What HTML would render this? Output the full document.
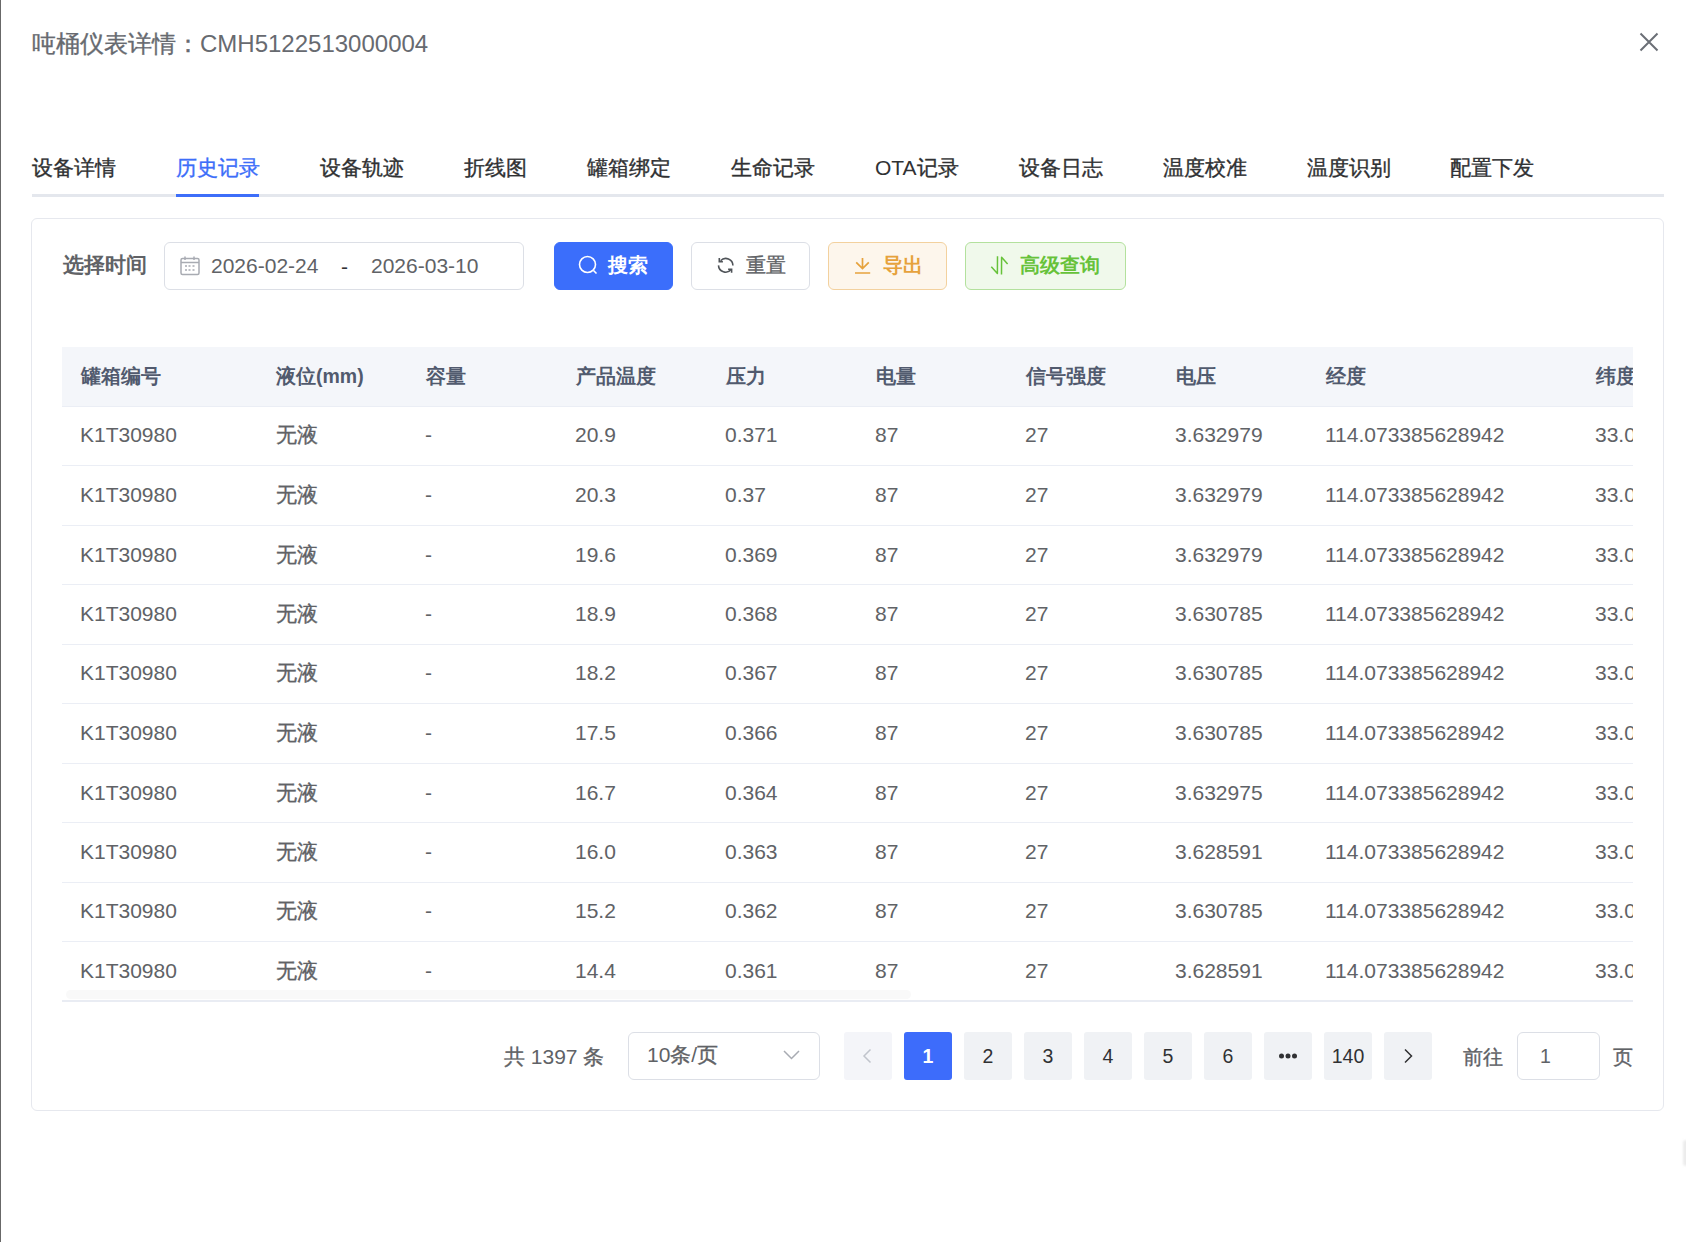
<!DOCTYPE html>
<html><head><meta charset="utf-8">
<style>
*{box-sizing:border-box;margin:0;padding:0}
html,body{width:1686px;height:1242px;overflow:hidden;background:#fff;font-family:"Liberation Sans",sans-serif}
.a{position:absolute;white-space:nowrap}
#edge{position:absolute;left:0;top:0;width:1px;height:1242px;background:#686868}
.ts{-webkit-text-stroke:0.35px currentColor}
#title{left:32px;top:30px;font-size:24px;line-height:28px;color:#676a70}
.tab{top:154px;font-size:21px;line-height:28px;color:#303133}
.tab.on{color:#3d6ef9}
#tabline{left:32px;top:194px;width:1632px;height:3px;background:#e4e7ed}
#tabbar{left:176px;top:194px;width:83px;height:3px;background:#3d6ef9}
#card{left:31px;top:218px;width:1633px;height:893px;border:1px solid #e6e8ee;border-radius:6px}
#lbl{left:63px;top:251px;font-size:21px;line-height:28px;font-weight:bold;color:#606266}
#date{left:164px;top:242px;width:360px;height:48px;border:1px solid #dcdfe6;border-radius:6px}
.dt{top:252px;font-size:21px;line-height:28px;color:#606266}
.btn{top:242px;height:48px;border-radius:6px;border:1px solid #dcdfe6}
.bt{top:250.5px;font-size:20px;line-height:28px;font-weight:bold}
#tbl{left:62px;top:347px;width:1571px;height:655px;overflow:hidden}
#thead{position:absolute;left:0;top:0;width:1571px;height:60px;background:#f4f6fa;border-bottom:1px solid #ebeef5}
.th{top:15px;font-size:19.5px;line-height:28px;font-weight:bold;color:#515a6e}
.row{position:absolute;left:0;width:1571px;border-bottom:1px solid #ebeef5}
.td{font-size:21px;line-height:28px;color:#606266}
#thumb{left:4px;top:643px;width:845px;height:9px;border-radius:5px;background:#f9f9f9}
#tbot{left:0;top:653px;width:1571px;height:2px;background:#e9ecf3}
.pg{top:1032px;width:48px;height:48px;border-radius:3px;background:#f0f2f5;font-size:19.5px;line-height:48px;text-align:center;color:#303133}
.pt{font-size:21px;line-height:28px;color:#606266}
</style></head><body>
<div id="edge"></div>
<div class="a" style="left:1683px;top:1140px;width:6px;height:26px;border-radius:3px;background:#ececec;filter:blur(1px)"></div>
<div id="title" class="a"><span class="ts">吨桶仪表详情：</span>CMH5122513000004</div>
<svg class="a" style="left:1638px;top:31px" width="22" height="22" viewBox="0 0 22 22"><path d="M2.5 2.5L19.5 19.5M19.5 2.5L2.5 19.5" stroke="#6b6f76" stroke-width="2" fill="none"/></svg>

<div class="a tab ts" style="left:32px">设备详情</div>
<div class="a tab on ts" style="left:176px">历史记录</div>
<div class="a tab ts" style="left:320px">设备轨迹</div>
<div class="a tab ts" style="left:464px">折线图</div>
<div class="a tab ts" style="left:587px">罐箱绑定</div>
<div class="a tab ts" style="left:731px">生命记录</div>
<div class="a tab" style="left:875px">OTA<span class="ts">记录</span></div>
<div class="a tab ts" style="left:1019px">设备日志</div>
<div class="a tab ts" style="left:1163px">温度校准</div>
<div class="a tab ts" style="left:1307px">温度识别</div>
<div class="a tab ts" style="left:1450px">配置下发</div>
<div id="tabline" class="a"></div>
<div id="tabbar" class="a"></div>

<div id="card" class="a"></div>
<div id="lbl" class="a">选择时间</div>
<div id="date" class="a"></div>
<svg class="a" style="left:178px;top:254px" width="24" height="24" viewBox="0 0 24 24" fill="none" stroke="#a8abb2" stroke-width="1.5">
<rect x="3" y="4.5" width="18" height="16" rx="1.5"/><path d="M3 8.5H21M7 2.5V6M16 2.5V6"/>
<path d="M7 12H9M10.5 12H12.5M14.5 12H16.5M7 16H9M10.5 16H12.5M14.5 16H16.5" stroke-width="1.4"/></svg>
<div class="a dt" style="left:211px">2026-02-24</div>
<div class="a dt" style="left:341px;top:253px;color:#303133">-</div>
<div class="a dt" style="left:371px">2026-03-10</div>

<div class="a btn" style="left:554px;width:119px;background:#3b6efb;border-color:#3b6efb"></div>
<svg class="a" style="left:576px;top:253px" width="24" height="24" viewBox="0 0 24 24" fill="none" stroke="#fff" stroke-width="1.6"><circle cx="11.5" cy="11.5" r="8"/><path d="M17.5 17.5L20.5 20.5"/></svg>
<div class="a bt" style="left:608px;color:#fff">搜索</div>

<div class="a btn" style="left:691px;width:119px;background:#fff"></div>
<svg class="a" style="left:712px;top:250px" width="30" height="30" viewBox="0 0 30 30" fill="none" stroke="#505459" stroke-width="1.6">
<path d="M8.6 10.7A7.1 7.1 0 0 1 20.9 15.6"/><path d="M7.3 8V11.8H10.9"/>
<path d="M6.5 15.4A7.1 7.1 0 0 0 19.1 19.6"/><path d="M16.1 19.2H19.6V22.8"/></svg>
<div class="a bt ts" style="left:746px;color:#606266;font-weight:normal">重置</div>

<div class="a btn" style="left:828px;width:119px;background:#fdf6ec;border-color:#f3d19e"></div>
<svg class="a" style="left:850px;top:253px" width="24" height="24" viewBox="0 0 24 24" fill="none" stroke="#e6a23c" stroke-width="1.7">
<path d="M12.5 5V15.5M6.2 9.3L12.5 15.6L18.8 9.3M5 20H20.2"/></svg>
<div class="a bt" style="left:883px;color:#e6a23c">导出</div>

<div class="a btn" style="left:965px;width:161px;background:#f0f9eb;border-color:#b3e19d"></div>
<svg class="a" style="left:987px;top:253px" width="24" height="24" viewBox="0 0 24 24" fill="none" stroke="#67c23a" stroke-width="1.5" stroke-linejoin="round">
<path d="M4.3 13.7L10.4 20.4L10.5 3.2M14.5 21.5L14.6 4.2L20.6 11"/></svg>
<div class="a bt" style="left:1020px;color:#67c23a">高级查询</div>

<div id="tbl" class="a">
<div id="thead">
<div class="a th" style="left:19px">罐箱编号</div>
<div class="a th" style="left:214px">液位(mm)</div>
<div class="a th" style="left:364px">容量</div>
<div class="a th" style="left:514px">产品温度</div>
<div class="a th" style="left:664px">压力</div>
<div class="a th" style="left:814px">电量</div>
<div class="a th" style="left:964px">信号强度</div>
<div class="a th" style="left:1114px">电压</div>
<div class="a th" style="left:1264px">经度</div>
<div class="a th" style="left:1534px">纬度</div>
</div>
<div id="rows"><div class="a td" style="left:18px;top:74px">K1T30980</div>
<div class="a td ts" style="left:214px;top:74px">无液</div>
<div class="a td" style="left:363px;top:74px">-</div>
<div class="a td" style="left:513px;top:74px">20.9</div>
<div class="a td" style="left:663px;top:74px">0.371</div>
<div class="a td" style="left:813px;top:74px">87</div>
<div class="a td" style="left:963px;top:74px">27</div>
<div class="a td" style="left:1113px;top:74px">3.632979</div>
<div class="a td" style="left:1263px;top:74px">114.073385628942</div>
<div class="a td" style="left:1533px;top:74px">33.012345</div>
<div class="row" style="top:118px;height:1px"></div>
<div class="a td" style="left:18px;top:134px">K1T30980</div>
<div class="a td ts" style="left:214px;top:134px">无液</div>
<div class="a td" style="left:363px;top:134px">-</div>
<div class="a td" style="left:513px;top:134px">20.3</div>
<div class="a td" style="left:663px;top:134px">0.37</div>
<div class="a td" style="left:813px;top:134px">87</div>
<div class="a td" style="left:963px;top:134px">27</div>
<div class="a td" style="left:1113px;top:134px">3.632979</div>
<div class="a td" style="left:1263px;top:134px">114.073385628942</div>
<div class="a td" style="left:1533px;top:134px">33.012345</div>
<div class="row" style="top:178px;height:1px"></div>
<div class="a td" style="left:18px;top:194px">K1T30980</div>
<div class="a td ts" style="left:214px;top:194px">无液</div>
<div class="a td" style="left:363px;top:194px">-</div>
<div class="a td" style="left:513px;top:194px">19.6</div>
<div class="a td" style="left:663px;top:194px">0.369</div>
<div class="a td" style="left:813px;top:194px">87</div>
<div class="a td" style="left:963px;top:194px">27</div>
<div class="a td" style="left:1113px;top:194px">3.632979</div>
<div class="a td" style="left:1263px;top:194px">114.073385628942</div>
<div class="a td" style="left:1533px;top:194px">33.012345</div>
<div class="row" style="top:237px;height:1px"></div>
<div class="a td" style="left:18px;top:253px">K1T30980</div>
<div class="a td ts" style="left:214px;top:253px">无液</div>
<div class="a td" style="left:363px;top:253px">-</div>
<div class="a td" style="left:513px;top:253px">18.9</div>
<div class="a td" style="left:663px;top:253px">0.368</div>
<div class="a td" style="left:813px;top:253px">87</div>
<div class="a td" style="left:963px;top:253px">27</div>
<div class="a td" style="left:1113px;top:253px">3.630785</div>
<div class="a td" style="left:1263px;top:253px">114.073385628942</div>
<div class="a td" style="left:1533px;top:253px">33.012345</div>
<div class="row" style="top:297px;height:1px"></div>
<div class="a td" style="left:18px;top:312px">K1T30980</div>
<div class="a td ts" style="left:214px;top:312px">无液</div>
<div class="a td" style="left:363px;top:312px">-</div>
<div class="a td" style="left:513px;top:312px">18.2</div>
<div class="a td" style="left:663px;top:312px">0.367</div>
<div class="a td" style="left:813px;top:312px">87</div>
<div class="a td" style="left:963px;top:312px">27</div>
<div class="a td" style="left:1113px;top:312px">3.630785</div>
<div class="a td" style="left:1263px;top:312px">114.073385628942</div>
<div class="a td" style="left:1533px;top:312px">33.012345</div>
<div class="row" style="top:356px;height:1px"></div>
<div class="a td" style="left:18px;top:372px">K1T30980</div>
<div class="a td ts" style="left:214px;top:372px">无液</div>
<div class="a td" style="left:363px;top:372px">-</div>
<div class="a td" style="left:513px;top:372px">17.5</div>
<div class="a td" style="left:663px;top:372px">0.366</div>
<div class="a td" style="left:813px;top:372px">87</div>
<div class="a td" style="left:963px;top:372px">27</div>
<div class="a td" style="left:1113px;top:372px">3.630785</div>
<div class="a td" style="left:1263px;top:372px">114.073385628942</div>
<div class="a td" style="left:1533px;top:372px">33.012345</div>
<div class="row" style="top:416px;height:1px"></div>
<div class="a td" style="left:18px;top:432px">K1T30980</div>
<div class="a td ts" style="left:214px;top:432px">无液</div>
<div class="a td" style="left:363px;top:432px">-</div>
<div class="a td" style="left:513px;top:432px">16.7</div>
<div class="a td" style="left:663px;top:432px">0.364</div>
<div class="a td" style="left:813px;top:432px">87</div>
<div class="a td" style="left:963px;top:432px">27</div>
<div class="a td" style="left:1113px;top:432px">3.632975</div>
<div class="a td" style="left:1263px;top:432px">114.073385628942</div>
<div class="a td" style="left:1533px;top:432px">33.012345</div>
<div class="row" style="top:475px;height:1px"></div>
<div class="a td" style="left:18px;top:491px">K1T30980</div>
<div class="a td ts" style="left:214px;top:491px">无液</div>
<div class="a td" style="left:363px;top:491px">-</div>
<div class="a td" style="left:513px;top:491px">16.0</div>
<div class="a td" style="left:663px;top:491px">0.363</div>
<div class="a td" style="left:813px;top:491px">87</div>
<div class="a td" style="left:963px;top:491px">27</div>
<div class="a td" style="left:1113px;top:491px">3.628591</div>
<div class="a td" style="left:1263px;top:491px">114.073385628942</div>
<div class="a td" style="left:1533px;top:491px">33.012345</div>
<div class="row" style="top:535px;height:1px"></div>
<div class="a td" style="left:18px;top:550px">K1T30980</div>
<div class="a td ts" style="left:214px;top:550px">无液</div>
<div class="a td" style="left:363px;top:550px">-</div>
<div class="a td" style="left:513px;top:550px">15.2</div>
<div class="a td" style="left:663px;top:550px">0.362</div>
<div class="a td" style="left:813px;top:550px">87</div>
<div class="a td" style="left:963px;top:550px">27</div>
<div class="a td" style="left:1113px;top:550px">3.630785</div>
<div class="a td" style="left:1263px;top:550px">114.073385628942</div>
<div class="a td" style="left:1533px;top:550px">33.012345</div>
<div class="row" style="top:594px;height:1px"></div>
<div class="a td" style="left:18px;top:610px">K1T30980</div>
<div class="a td ts" style="left:214px;top:610px">无液</div>
<div class="a td" style="left:363px;top:610px">-</div>
<div class="a td" style="left:513px;top:610px">14.4</div>
<div class="a td" style="left:663px;top:610px">0.361</div>
<div class="a td" style="left:813px;top:610px">87</div>
<div class="a td" style="left:963px;top:610px">27</div>
<div class="a td" style="left:1113px;top:610px">3.628591</div>
<div class="a td" style="left:1263px;top:610px">114.073385628942</div>
<div class="a td" style="left:1533px;top:610px">33.012345</div>
</div>
<div id="thumb" class="a"></div>
<div id="tbot" class="a"></div>
</div>

<div class="a pt" style="left:504px;top:1043px"><span class="ts">共</span> 1397 <span class="ts">条</span></div>
<div class="a" style="left:628px;top:1032px;width:192px;height:48px;border:1px solid #dcdfe6;border-radius:6px"></div>
<div class="a pt" style="left:647px;top:1041px">10<span class="ts">条</span>/<span class="ts">页</span></div>
<svg class="a" style="left:782px;top:1049px" width="19" height="12" viewBox="0 0 19 12" fill="none" stroke="#a8abb2" stroke-width="1.5"><path d="M2 2L9.5 9.5L17 2"/></svg>

<div class="a pg" style="left:844px;background:#f4f5f9"></div>
<svg class="a" style="left:861px;top:1047px" width="12" height="18" viewBox="0 0 12 18" fill="none" stroke="#c0c4cc" stroke-width="1.5"><path d="M9.5 2.5L3 9L9.5 15.5"/></svg>
<div class="a pg" style="left:904px;background:#3d6cfb;color:#fff;font-weight:bold">1</div>
<div class="a pg" style="left:964px">2</div>
<div class="a pg" style="left:1024px">3</div>
<div class="a pg" style="left:1084px">4</div>
<div class="a pg" style="left:1144px">5</div>
<div class="a pg" style="left:1204px">6</div>
<div class="a pg" style="left:1264px"></div>
<svg class="a" style="left:1276px;top:1051px" width="24" height="10" viewBox="0 0 24 10" fill="#303133"><circle cx="5.5" cy="5" r="2.5"/><circle cx="12" cy="5" r="2.5"/><circle cx="18.5" cy="5" r="2.5"/></svg>
<div class="a pg" style="left:1324px">140</div>
<div class="a pg" style="left:1384px"></div>
<svg class="a" style="left:1402px;top:1047px" width="12" height="18" viewBox="0 0 12 18" fill="none" stroke="#303133" stroke-width="1.5"><path d="M3 2.5L9.5 9L3 15.5"/></svg>
<div class="a pt" style="left:1463px;top:1043px;font-size:19.5px" ><span class="ts">前往</span></div>
<div class="a" style="left:1517px;top:1032px;width:83px;height:48px;border:1px solid #dcdfe6;border-radius:6px"></div>
<div class="a pt" style="left:1540px;top:1042px;font-size:19.5px">1</div>
<div class="a pt" style="left:1613px;top:1043px;font-size:19.5px"><span class="ts">页</span></div>


</body></html>
